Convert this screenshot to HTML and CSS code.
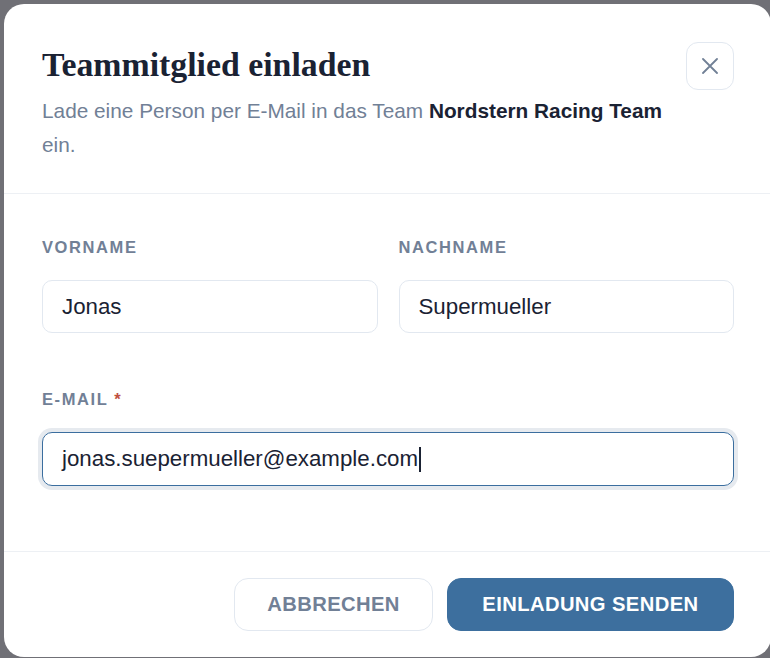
FILE: index.html
```html
<!DOCTYPE html>
<html lang="de">
<head>
<meta charset="utf-8">
<title>Teammitglied einladen</title>
<link rel="stylesheet" href="styles.css">
</head>
<body>
<div class="modal" role="dialog" aria-labelledby="dlg-title">
  <header class="modal-header">
    <div class="header-text">
      <h1 id="dlg-title" class="title">Teammitglied einladen</h1>
      <p class="subtitle">Lade eine Person per E-Mail in das Team <strong>Nordstern Racing Team</strong> ein.</p>
    </div>
    <button class="close-btn" aria-label="Schließen">
      <svg width="16" height="16" viewBox="0 0 16 16" fill="none" stroke="#718096" stroke-width="1.8" stroke-linecap="round">
        <path d="M1 1L15 15M15 1L1 15"/>
      </svg>
    </button>
  </header>
  <section class="modal-body">
    <div class="row two-col">
      <div class="field">
        <label class="label">Vorname</label>
        <div class="input">Jonas</div>
      </div>
      <div class="field">
        <label class="label">Nachname</label>
        <div class="input">Supermueller</div>
      </div>
    </div>
    <div class="row">
      <div class="field">
        <label class="label">E-Mail <span class="req">*</span></label>
        <div class="input focused">jonas.suepermueller@example.com<span class="caret"></span></div>
      </div>
    </div>
  </section>
  <footer class="modal-footer">
    <button class="btn btn-secondary">Abbrechen</button>
    <button class="btn btn-primary">Einladung senden</button>
  </footer>
</div>
</body>
</html>
```

FILE: styles.css
```css
* { box-sizing: border-box; }
html, body { margin: 0; padding: 0; }
body {
  background: #707076;
  width: 770px;
  height: 658px;
  overflow: hidden;
  padding: 4px 0 0 4px;
  font-family: "Liberation Sans", Arial, sans-serif;
}
.modal {
  width: 767px;
  height: 653px;
  background: #ffffff;
  border-radius: 20px;
  display: flex;
  flex-direction: column;
}
.modal-header {
  display: flex;
  align-items: flex-start;
  gap: 20px;
  padding: 38px 37px 31px 38px;
  border-bottom: 1px solid #edf0f4;
}
.header-text { flex: 1; }
.title {
  margin: 0;
  font-family: "Liberation Serif", "Times New Roman", serif;
  font-weight: 700;
  font-size: 33.8px;
  line-height: 40px;
  color: #1a2233;
  padding-top: 3px;
}
.subtitle {
  margin: 9px 0 0;
  font-size: 20.8px;
  line-height: 34px;
  color: #718096;
}
.subtitle strong { color: #1a2233; font-weight: 700; }
.close-btn {
  flex: none;
  width: 48px;
  height: 48px;
  border: 1px solid #e2e8f0;
  border-radius: 12px;
  background: #fff;
  display: flex;
  align-items: center;
  justify-content: center;
  padding: 0;
}
.modal-body {
  padding: 43px 37px 65px 38px;
  border-bottom: 1px solid #edf0f4;
  display: flex;
  flex-direction: column;
  gap: 56px;
}
.two-col {
  display: grid;
  grid-template-columns: 1fr 1fr;
  gap: 21px;
}
.field { display: flex; flex-direction: column; gap: 23px; }
.label {
  font-size: 16.5px;
  line-height: 20px;
  font-weight: 700;
  letter-spacing: 1.6px;
  text-transform: uppercase;
  color: #718096;
}
.req { color: #c0503f; letter-spacing: 0; }
.input {
  height: 53px;
  border: 1px solid #e2e8f0;
  border-radius: 10px;
  padding: 0 19px;
  display: flex;
  align-items: center;
  font-size: 22.3px;
  color: #1a2233;
}
.input.focused {
  height: 54px;
  border-color: #3b6e9f;
  box-shadow: 0 0 0 4px #e6eaef;
}
.caret {
  display: inline-block;
  width: 2px;
  height: 25px;
  background: #1a2233;
  margin-left: 1px;
}
.modal-footer {
  flex: 1;
  display: flex;
  justify-content: flex-end;
  align-items: flex-start;
  gap: 14px;
  padding: 26px 37px 0 38px;
}
.btn {
  height: 53px;
  border-radius: 14px;
  font-family: "Liberation Sans", Arial, sans-serif;
  font-size: 20.2px;
  font-weight: 700;
  letter-spacing: 0.4px;
  text-transform: uppercase;
  cursor: pointer;
}
.btn-secondary {
  background: #fff;
  border: 1px solid #e2e8f0;
  color: #718096;
  padding: 0 32px;
}
.btn-primary {
  background: #3d6f9e;
  border: 1px solid #3d6f9e;
  color: #fff;
  padding: 0 34.5px;
}
```
